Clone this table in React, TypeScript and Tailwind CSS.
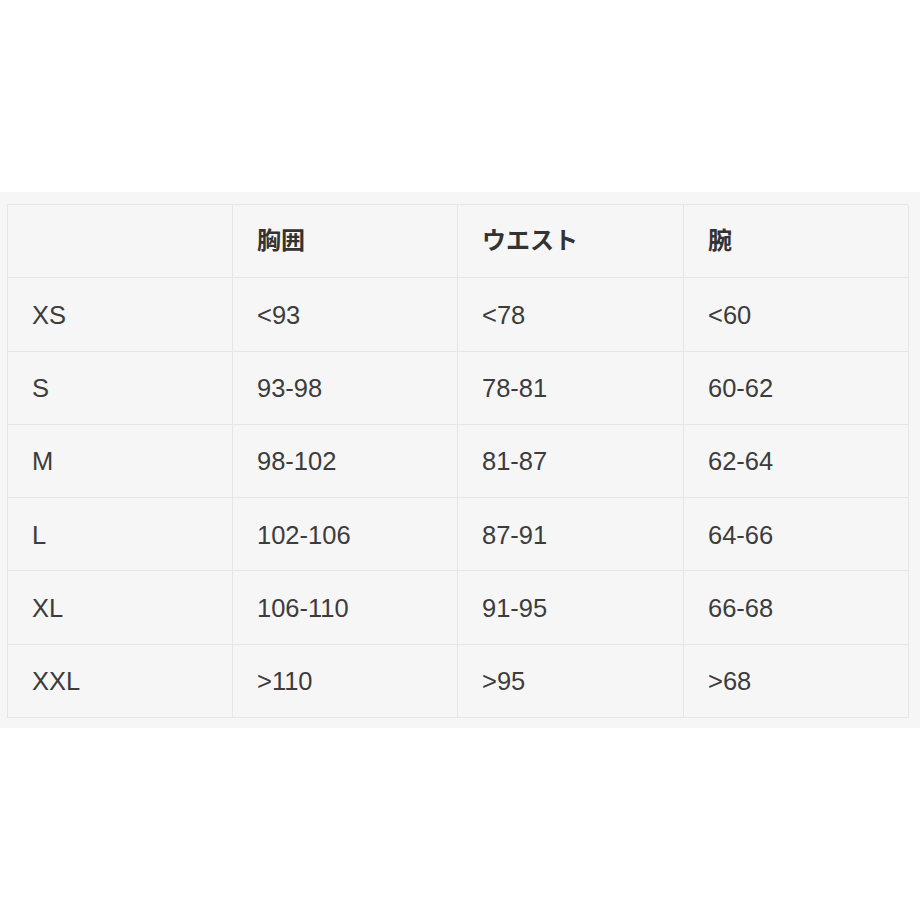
import React from "react";

const header = ["", "胸囲", "ウエスト", "腕"];
const rows = [
  ["XS", "<93", "<78", "<60"],
  ["S", "93-98", "78-81", "60-62"],
  ["M", "98-102", "81-87", "62-64"],
  ["L", "102-106", "87-91", "64-66"],
  ["XL", "106-110", "91-95", "66-68"],
  ["XXL", ">110", ">95", ">68"],
];

export default function App() {
  return (
    <div className="w-[920px] h-[920px] bg-white flex flex-col">
      <div className="h-[192px]" />
      <div className="bg-[#f7f6f7] pt-[12px] pl-[7px] pr-[12px] pb-[10px]">
        <div
          className="grid grid-cols-[225px_225px_226px_225px] border-l border-t border-[#e7e6e7]"
          style={{ fontFamily: '"Liberation Sans", "Noto Sans CJK JP", sans-serif' }}
        >
          {header.map((h, i) => (
            <div
              key={i}
              className="h-[73.3px] border-r border-b border-[#e7e6e7] flex items-center pl-[24px] pb-[4px] text-[24px] font-bold text-[#333333]"
              style={{ fontFamily: '"Noto Sans CJK JP", sans-serif' }}
            >
              {h}
            </div>
          ))}
          {rows.map((r, ri) =>
            r.map((c, ci) => (
              <div
                key={`${ri}-${ci}`}
                className="h-[73.3px] border-r border-b border-[#e7e6e7] flex items-center pl-[24px] pt-[1px] text-[25.5px] text-[#3c3c3c]"
              >
                {c}
              </div>
            ))
          )}
        </div>
      </div>
    </div>
  );
}
